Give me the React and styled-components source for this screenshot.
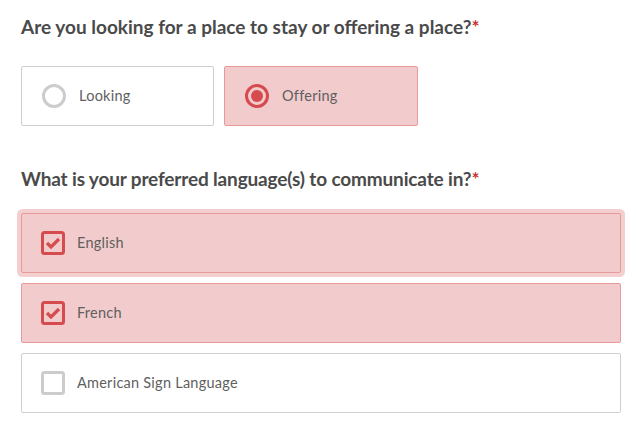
import React from "react";
import styled, { createGlobalStyle, css } from "styled-components";

const Global = createGlobalStyle`
  html, body { margin: 0; padding: 0; background: #fff; }
  body { font-family: Lato, "Open Sans", sans-serif; }
`;

const Page = styled.div`
  padding: 15px 15px 0 21px;
  width: 600px;
`;

const Question = styled.h2`
  margin: 0;
  font-size: 19px;
  line-height: 24px;
  font-weight: 700;
  color: #4a4a4a;
  letter-spacing: ${(p) => p.$ls || 0}px;
  margin-top: ${(p) => p.$top || 0}px;
`;

const Req = styled.span`
  color: #c8352d;
`;

const RadioRow = styled.div`
  display: flex;
  gap: 10px;
  margin-top: 27px;
`;

const Choice = styled.label`
  box-sizing: border-box;
  display: flex;
  align-items: center;
  gap: 12px;
  height: 60px;
  padding-left: 19px;
  border: 1px solid ${(p) => (p.$on ? "#e89a9a" : "#cfcfcf")};
  border-radius: 2px;
  background: ${(p) => (p.$on ? "#f2cbcc" : "#fff")};
  width: ${(p) => p.$w || "100%"};
  ${(p) =>
    p.$focus &&
    css`
      box-shadow: 0 0 0 4px #f3cfd0;
    `}
`;

const Label = styled.span`
  font-size: 14.5px;
  color: #5f5f5f;
  letter-spacing: 0.25px;
  margin-bottom: 2px;
`;

const CheckList = styled.div`
  display: flex;
  flex-direction: column;
  gap: 10px;
  margin-top: 22px;
`;

const RadioIcon = ({ on }) => (
  <svg width="26" height="26" viewBox="0 0 26 26">
    <circle cx="13" cy="13" r="10.5" fill="none" stroke={on ? "#d64b4d" : "#cccccc"} strokeWidth="3" />
    {on && <circle cx="13" cy="13" r="6" fill="#d64b4d" />}
  </svg>
);

const CheckIcon = ({ on }) => (
  <svg width="24" height="24" viewBox="0 0 24 24">
    <rect x="1.5" y="1.5" width="21" height="21" rx="2" fill="none" stroke={on ? "#d64b4d" : "#cccccc"} strokeWidth="3" />
    {on && (
      <path d="M6 12 L10 16 L18 8" fill="none" stroke="#d64b4d" strokeWidth="3.2" strokeLinejoin="miter" />
    )}
  </svg>
);

export default function App() {
  return (
    <Page>
      <Global />
      <Question>
        Are you looking for a place to stay or offering a place?<Req>*</Req>
      </Question>
      <RadioRow>
        <Choice $w="193px">
          <RadioIcon />
          <Label>Looking</Label>
        </Choice>
        <Choice $w="194px" $on>
          <RadioIcon on />
          <Label>Offering</Label>
        </Choice>
      </RadioRow>
      <Question $top={41} $ls={-0.15}>
        What is your preferred language(s) to communicate in?<Req>*</Req>
      </Question>
      <CheckList>
        <Choice $on $focus>
          <CheckIcon on />
          <Label>English</Label>
        </Choice>
        <Choice $on>
          <CheckIcon on />
          <Label>French</Label>
        </Choice>
        <Choice>
          <CheckIcon />
          <Label>American Sign Language</Label>
        </Choice>
      </CheckList>
    </Page>
  );
}
